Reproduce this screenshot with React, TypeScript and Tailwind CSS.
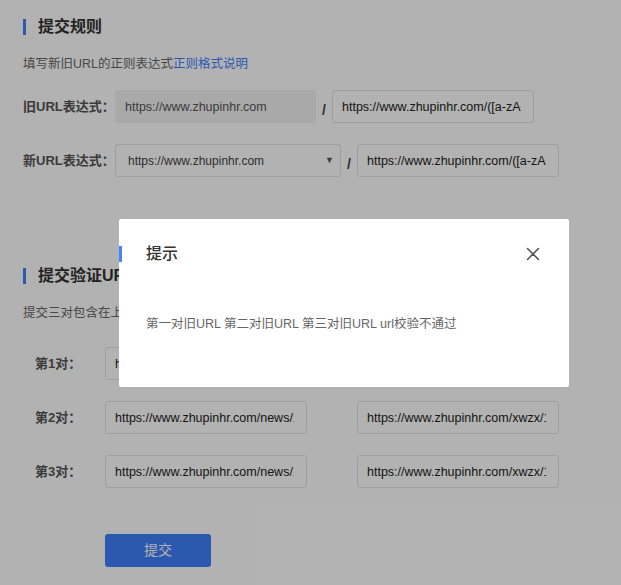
import React from 'react';

const FONT = { fontFamily: '"Liberation Sans", "Noto Sans CJK SC", sans-serif' };

function Heading({ title }: { title: string }) {
  return (
    <div className="flex h-[20px] items-center">
      <span className="h-[16px] w-[3px] bg-[#3f80fc]" />
      <h2 className="ml-[12px] text-[16px] font-bold leading-[20px] text-[#333]">{title}</h2>
    </div>
  );
}

function TextBox({ value, disabled, className = '' }: { value: string; disabled?: boolean; className?: string }) {
  return (
    <input
      readOnly
      value={value}
      spellCheck={false}
      className={
        'h-[33px] rounded-[3px] border pl-[9px] pr-[12px] text-[12.5px] outline-none ' +
        (disabled ? 'border-[#f3f3f3] bg-[#f3f3f3] text-[#555] ' : 'border-[#e3e3e3] bg-white text-[#222] ') +
        className
      }
      style={FONT}
    />
  );
}

function Slash() {
  return <span className="flex w-[16px] justify-center pt-[8px] text-[14px] font-bold text-[#444]">/</span>;
}

function PairRow({ label, oldUrl, newUrl }: { label: string; oldUrl: string; newUrl: string }) {
  return (
    <div className="flex items-center">
      <span className="w-[82px] pl-[12px] text-[13px] font-bold text-[#555]">{label}</span>
      <TextBox value={oldUrl} className="w-[202px]" />
      <div className="w-[50px]" />
      <TextBox value={newUrl} className="w-[202px]" />
    </div>
  );
}

export default function App() {
  return (
    <div className="relative h-[585px] w-[621px] overflow-hidden bg-white" style={FONT}>
      <div className="pl-[23px] pt-[17px]">
        <Heading title="提交规则" />
        <p className="mt-[17px] text-[12.5px] leading-[20px] text-[#666]">
          填写新旧URL的正则表达式<span className="text-[#3f80fc]">正则格式说明</span>
        </p>

        <div className="mt-[16px] flex items-center">
          <span className="w-[92px] text-[13px] font-bold text-[#555]">旧URL表达式：</span>
          <TextBox value="https://www.zhupinhr.com" disabled className="w-[201px]" />
          <Slash />
          <TextBox value="https://www.zhupinhr.com/([a-zA-Z]+)/(\d+).html" className="w-[202px]" />
        </div>

        <div className="mt-[21px] flex items-center">
          <span className="w-[92px] text-[13px] font-bold text-[#555]">新URL表达式：</span>
          <div className="flex h-[33px] w-[226px] items-center justify-between rounded-[3px] border border-[#e3e3e3] bg-white pl-[12px] pr-[6px] text-[12px] text-[#444]">
            <span>https://www.zhupinhr.com</span>
            <span className="text-[9px] text-[#555]">▼</span>
          </div>
          <Slash />
          <TextBox value="https://www.zhupinhr.com/([a-zA-Z]+)/(\d+).html" className="w-[202px]" />
        </div>

        <div className="mt-[89px]">
          <Heading title="提交验证URL" />
        </div>
        <p className="mt-[17px] text-[12.5px] leading-[20px] text-[#666]">提交三对包含在上述规则内的URL</p>

        <div className="mt-[24px] flex flex-col gap-[21px]">
          <PairRow label="第1对：" oldUrl="https://www.zhupinhr.com/news/1001.html" newUrl="https://www.zhupinhr.com/xwzx/1001.html" />
          <PairRow label="第2对：" oldUrl="https://www.zhupinhr.com/news/1002.html" newUrl="https://www.zhupinhr.com/xwzx/1002.html" />
          <PairRow label="第3对：" oldUrl="https://www.zhupinhr.com/news/1003.html" newUrl="https://www.zhupinhr.com/xwzx/1003.html" />
        </div>

        <button className="ml-[82px] mt-[46px] h-[33px] w-[106px] rounded-[3px] bg-[#3f80fc] text-[14px] text-white">
          提交
        </button>
      </div>

      {/* mask */}
      <div className="absolute inset-0 bg-black/30" />

      {/* dialog */}
      <div className="absolute left-[119px] top-[219px] h-[168px] w-[450px] rounded-[2px] bg-white">
        <div className="mt-[27px] flex h-[16px] items-center">
          <span className="h-[16px] w-[3px] bg-[#4286f5]" />
          <h3 className="ml-[24px] text-[16px] font-medium leading-[20px] text-[#333]">提示</h3>
          <button className="ml-auto mr-[29px] text-[#555]" aria-label="close">
            <svg width="14" height="14" viewBox="0 0 14 14" fill="none" stroke="currentColor" strokeWidth="1.6" strokeLinecap="round">
              <path d="M1.5 1.5l11 11M12.5 1.5l-11 11" />
            </svg>
          </button>
        </div>
        <p className="ml-[27px] mt-[52px] text-[12.5px] leading-[20px] text-[#666]">
          第一对旧URL 第二对旧URL 第三对旧URL url校验不通过
        </p>
      </div>
    </div>
  );
}
